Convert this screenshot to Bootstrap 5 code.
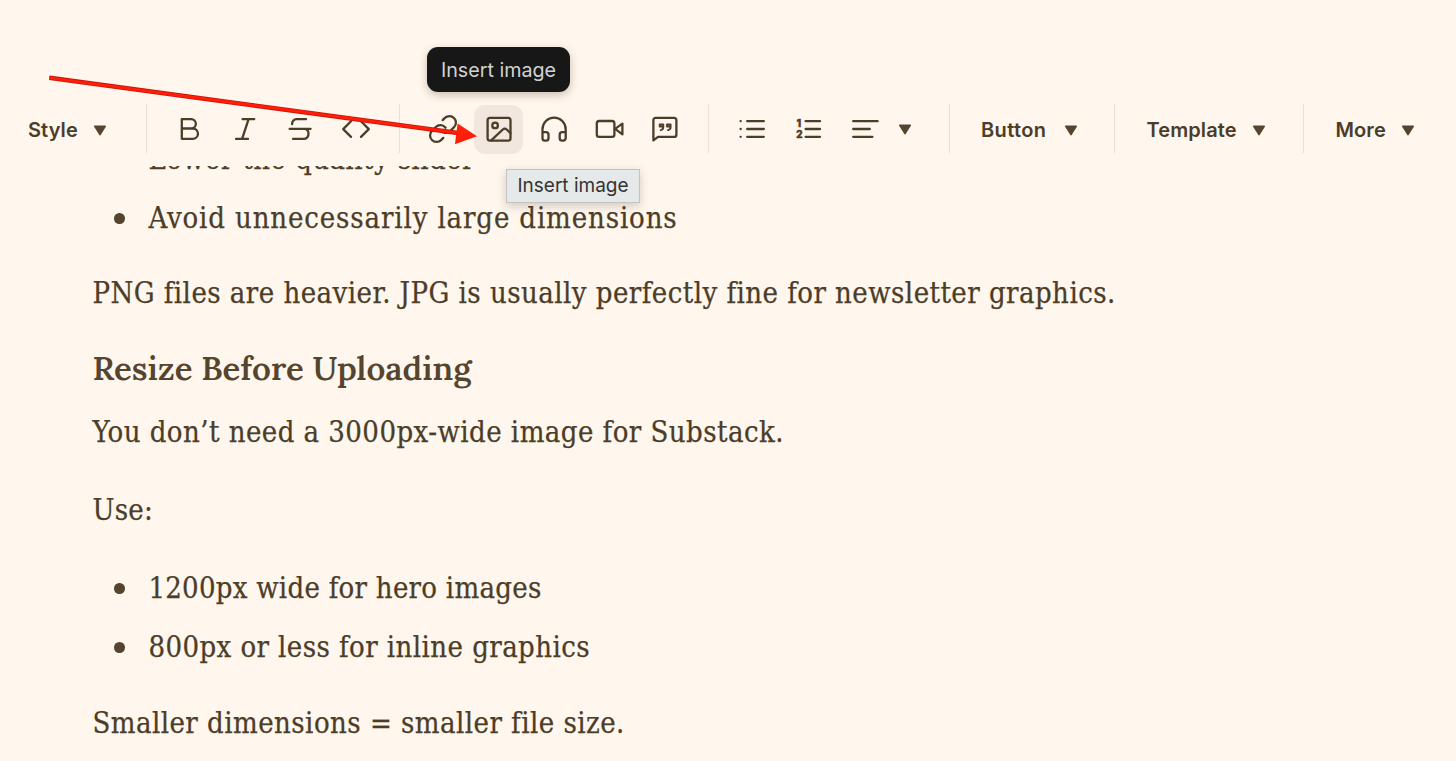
<!DOCTYPE html>
<html lang="en">
<head>
<meta charset="utf-8">
<meta name="viewport" content="width=device-width, initial-scale=1">
<title>Post editor</title>
<link href="https://cdn.jsdelivr.net/npm/bootstrap@5.3.0/dist/css/bootstrap.min.css" rel="stylesheet">
<style>
  :root { --paper: #fff6ed; --ink: #4b3d28; --rule: #eadfd5; }
  body { background: var(--paper); color: var(--ink); height: 761px; font-family: Inter, "Liberation Sans", sans-serif; }
  .toolbar { height: 166px; padding-top: 104px; background: var(--paper); }
  .tool-group { height: 49px; flex: none; border-left: 1px solid var(--rule); }
  .tool-group.first { border-left: 0; width: 146px; padding-left: 28px; }
  .g-format { width: 253px; padding-left: 18.2px; }
  .g-insert { width: 309px; padding-left: 18.8px; }
  .g-lists { width: 241px; padding-left: 18.8px; }
  .g-button { width: 165px; padding-left: 31px; }
  .g-template { width: 189px; padding-left: 31.5px; }
  .g-more { width: 153px; padding-left: 31.5px; }
  .tool { width: 49px; height: 49px; margin-top: .8px; margin-right: 6.4px; padding: 0; border: 0; border-radius: 11px; color: inherit; flex: none; }
  .tool.active { background: #f1e7df; color: inherit; }
  .tool svg { width: 32px; height: 32px; }
  .tool svg { fill: none; stroke: currentColor; stroke-width: 2.3; stroke-linecap: round; stroke-linejoin: round; }
  .tool svg text { fill: currentColor; stroke: currentColor; stroke-width: .7; font: 700 10px Inter, sans-serif; }
  .menu { color: inherit; font-size: 20px; font-weight: 600; letter-spacing: .1px; line-height: 46px; padding: 2px 0 0; border: 0; height: 50px; white-space: nowrap; }
  .tri, .tool svg.tri { width: 14px; height: 11px; fill: #55452f; stroke: #55452f; stroke-width: 1.6; stroke-linejoin: round; flex: none; }
  .tip-dark { left: 427px; top: 47px; width: 143px; height: 45px; padding-top: 2px; border-radius: 11px; background: #171717; color: #d2d2d2; font-size: 19.7px; box-shadow: 0 3px 8px rgba(70,45,20,.28); z-index: 3; }
  .tip-native { left: 506px; top: 169px; width: 134px; height: 34px; background: #e6e9ea; color: #343332; border: 1px solid #c3c3c1; font-size: 19px; box-shadow: 0 3px 9px rgba(60,45,30,.22); z-index: 3; }
  .pointer { left: 0; top: 0; z-index: 4; pointer-events: none; }
  .post { height: 595px; padding-left: 92.4px; font-family: "Roboto Slab", "DejaVu Serif Condensed", "DejaVu Serif", serif; font-size: 29px; line-height: 48px; letter-spacing: .45px; white-space: nowrap; -webkit-text-stroke: .25px var(--ink); }
  .post p, .post ul { margin: 0 0 30px; }
  .post ul { list-style: none; padding-left: 56px; }
  .post li { position: relative; margin-bottom: 11px; }
  .post li:last-child { margin-bottom: 0; }
  .post ul:not(.scrolled) { margin-bottom: 28px; }
  .post li::before { content: ""; position: absolute; left: -34px; top: 19px; width: 10.5px; height: 10.5px; border-radius: 50%; background: #55452f; }
  .post .scrolled { margin: -31px 0 27px; }
  .post h3 { font: 600 33px/48px Lora, "Liberation Serif", serif; letter-spacing: 0; -webkit-text-stroke: 0; margin: -3px 0 16px; color: #55452f; }
  .ls-a { letter-spacing: .26px; } .ls-b { letter-spacing: .86px; } .ls-c { letter-spacing: .42px; }
</style>
</head>
<body class="position-relative overflow-hidden">
<header class="toolbar d-flex align-items-start">
  <div class="tool-group first d-flex"><button class="btn menu d-flex align-items-center" style="gap:15.5px">Style<svg class="tri" viewBox="0 0 13 11"><path d="M1.3 1.3h10.4L6.5 9.6z"/></svg></button></div>
  <div class="tool-group g-format d-flex">
    <button class="btn tool" aria-label="Bold"><svg viewBox="0 0 32 32"><path d="M7.8 6.2h9.4a4.6 4.6 0 0 1 0 9.3H7.8zM7.8 15.5h11a5.1 5.1 0 0 1 0 10.3h-11z"/></svg></button>
    <button class="btn tool" aria-label="Italic"><svg viewBox="0 0 32 32"><path d="M13.6 6.2h11.6M7 25.9h12M19.6 6.2l-6.5 19.7"/></svg></button>
    <button class="btn tool" aria-label="Strikethrough"><svg viewBox="0 0 32 32"><path d="M5.6 15.8h21M22 6.2h-9.5a4.6 4.6 0 0 0-4.4 5M20.3 15.8q4.2.5 4.2 4.6 0 5.4-5 5.4H9"/></svg></button>
    <button class="btn tool" aria-label="Code"><svg viewBox="0 0 32 32"><path d="M11 8.3l-7.8 7.8 7.8 7.8M21 8.3l7.8 7.8-7.8 7.8"/></svg></button>
  </div>
  <div class="tool-group g-insert d-flex">
    <button class="btn tool" aria-label="Link"><svg viewBox="0 0 32 32"><g transform="translate(.4 .4) scale(1.3)" stroke-width="1.75"><path d="M10 13a5 5 0 0 0 7.54.54l3-3a5 5 0 0 0-7.07-7.07l-1.72 1.71"/><path d="M14 11a5 5 0 0 0-7.54-.54l-3 3a5 5 0 0 0 7.07 7.07l1.71-1.71"/></g></svg></button>
    <button class="btn tool active" aria-label="Insert image"><svg viewBox="0 0 32 32"><rect x="4.6" y="4.8" width="22.9" height="22.9" rx="2.4"/><circle cx="12.1" cy="12.4" r="2.8"/><path d="M8.2 27.4L19.8 16.5q2-1.8 3.9 0l3.8 3.6"/></svg></button>
    <button class="btn tool" aria-label="Audio"><svg viewBox="0 0 32 32"><path d="M4.5 19.4v-3.2a11.6 11.6 0 0 1 23.2 0v3.2M4.5 19.2h3.4a2.6 2.6 0 0 1 2.6 2.6v3.4a2.4 2.4 0 0 1-2.4 2.4h-1.2a2.4 2.4 0 0 1-2.4-2.4zM27.7 19.2h-3.4a2.6 2.6 0 0 0-2.6 2.6v3.4a2.4 2.4 0 0 0 2.4 2.4h1.2a2.4 2.4 0 0 0 2.4-2.4z"/></svg></button>
    <button class="btn tool" aria-label="Video"><svg viewBox="0 0 32 32"><rect x="3.8" y="8" width="17.6" height="15.8" rx="2.4"/><path d="M22.1 15.9l7.3-5.3v10.8z"/></svg></button>
    <button class="btn tool" aria-label="Quote"><svg viewBox="0 0 32 32"><path d="M4.4 27.3V7a2.2 2.2 0 0 1 2.2-2.2h18.6A2.2 2.2 0 0 1 27.4 7v14.7a2.2 2.2 0 0 1-2.2 2.2H9z"/><path stroke-width="1.9" d="M10.7 11.4h3.6v2.7q0 2.8-2.6 3M10.7 11.4v2.1h3.2M18 11.4h3.6v2.7q0 2.8-2.6 3M18 11.4v2.1h3.2"/></svg></button>
  </div>
  <div class="tool-group g-lists d-flex">
    <button class="btn tool" aria-label="Bulleted list"><svg viewBox="0 0 32 32"><path d="M11.2 8.2h16.6M11.2 16h16.6M11.2 23.8h16.6M4.6 8.2h.1M4.6 16h.1M4.6 23.8h.1"/></svg></button>
    <button class="btn tool" aria-label="Numbered list"><svg viewBox="0 0 32 32"><path d="M13.6 8.2h14.4M13.6 16h14.4M13.6 23.8h14.4"/><text x="4.7" y="14.3">1</text><text x="4.2" y="25.2">2</text></svg></button>
    <button class="btn tool d-flex align-items-center" aria-label="Align" style="width:80px;gap:15.5px;padding-left:11.5px"><svg class="flex-shrink-0" viewBox="0 0 32 32"><path d="M3.2 8.2h24.4M3.2 16h16.6M3.2 23.8h19.2"/></svg><svg class="tri" viewBox="0 0 13 11"><path d="M1.3 1.3h10.4L6.5 9.6z"/></svg></button>
  </div>
  <div class="tool-group g-button"><button class="btn menu d-flex align-items-center" style="gap:17.5px;letter-spacing:.35px">Button<svg class="tri" viewBox="0 0 13 11"><path d="M1.3 1.3h10.4L6.5 9.6z"/></svg></button></div>
  <div class="tool-group g-template"><button class="btn menu d-flex align-items-center" style="gap:15px">Template<svg class="tri" viewBox="0 0 13 11"><path d="M1.3 1.3h10.4L6.5 9.6z"/></svg></button></div>
  <div class="tool-group g-more"><button class="btn menu d-flex align-items-center" style="gap:15px">More<svg class="tri" viewBox="0 0 13 11"><path d="M1.3 1.3h10.4L6.5 9.6z"/></svg></button></div>
</header>

<main class="post overflow-hidden">
  <ul class="scrolled">
    <li class="ls-c">Lower the quality slider</li>
    <li class="ls-b">Avoid unnecessarily large dimensions</li>
  </ul>
  <p>PNG files are heavier. JPG is usually perfectly fine for newsletter graphics.</p>
  <h3>Resize Before Uploading</h3>
  <p>You don’t need a 3000px-wide image for Substack.</p>
  <p class="ls-a">Use:</p>
  <ul>
    <li class="ls-a">1200px wide for hero images</li>
    <li class="ls-c">800px or less for inline graphics</li>
  </ul>
  <p>Smaller dimensions = smaller file size.</p>
</main>

<div class="tip-dark position-absolute d-flex align-items-center justify-content-center" role="tooltip">Insert image</div>
<div class="tip-native position-absolute d-flex align-items-center justify-content-center" role="tooltip">Insert image</div>
<svg class="pointer position-absolute" width="500" height="160" viewBox="0 0 500 160"><path d="M49.3 77.8L458 133" stroke="#c81408" stroke-width="4.4"/><path d="M49.3 77.8L458 133" stroke="#ff1e08" stroke-width="2.8"/><path d="M457.6 123.5L477 136.2 455 144.2z" fill="#ff1e08"/></svg>
<script src="https://cdn.jsdelivr.net/npm/bootstrap@5.3.0/dist/js/bootstrap.bundle.min.js"></script>
</body>
</html>
